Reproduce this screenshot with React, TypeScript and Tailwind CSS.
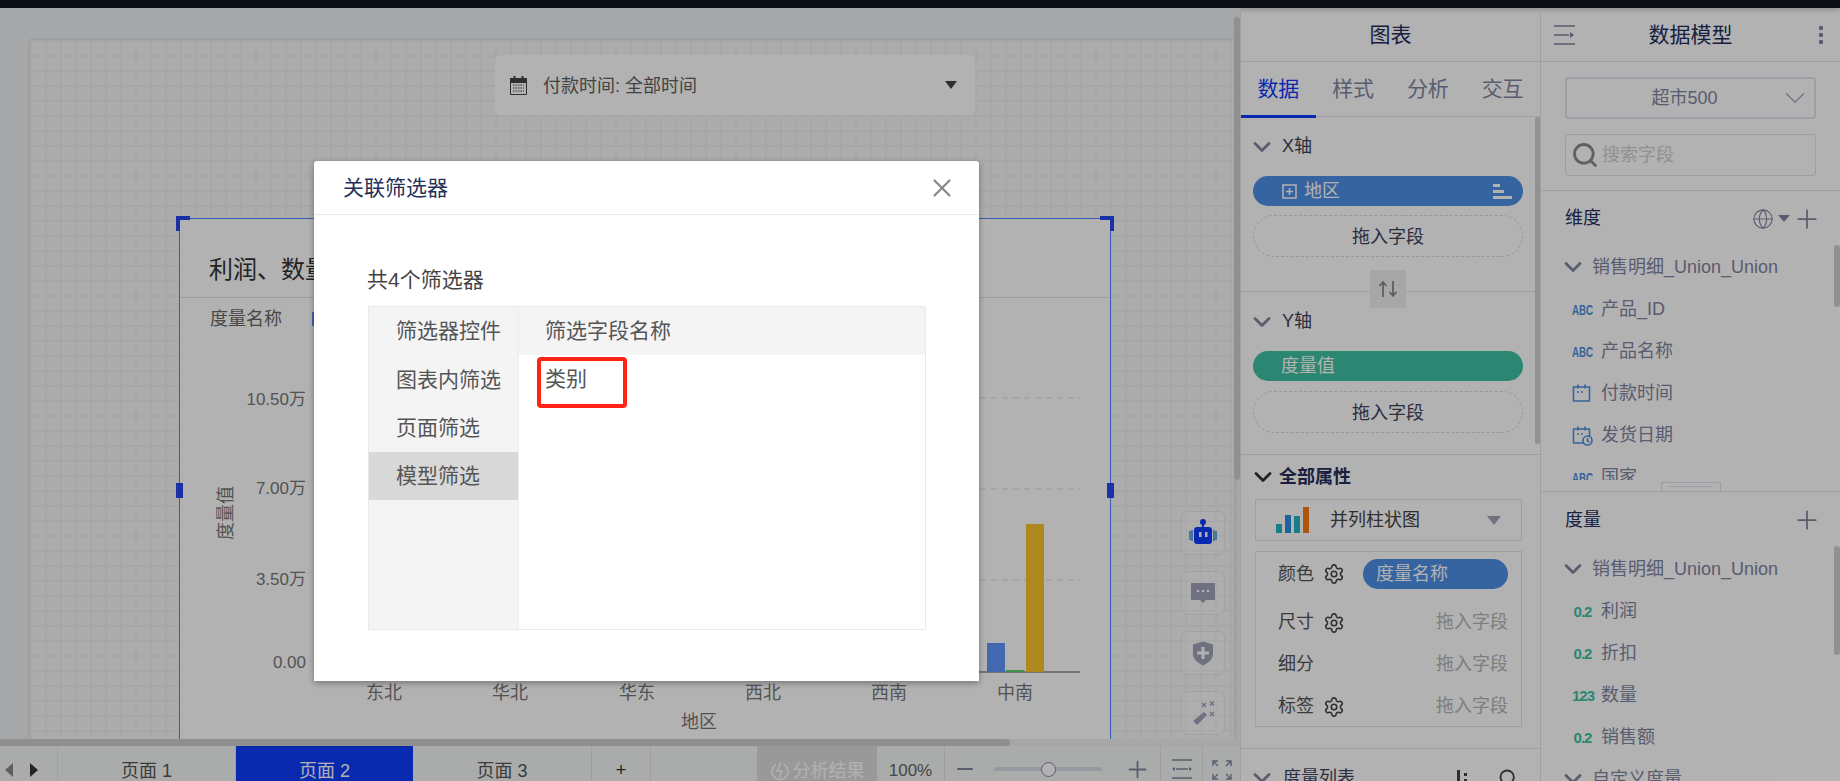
import { ChevronDown, Settings, Search, Globe, Plus, X, Minus } from "lucide-react";

const Gear = () => <Settings size={22} strokeWidth={1.7} className="text-[#444]" />;

function AbcTag() {
  return <span className="inline-block w-[21px] text-[15px] font-bold leading-none text-[#4f8fdc] scale-x-[.65] origin-left whitespace-nowrap">ABC</span>;
}
function NumTag({ t }: { t: string }) {
  return <span className="inline-block w-[21px] text-[15px] font-bold leading-none text-[#40c2a4] tracking-[-1px] text-center whitespace-nowrap">{t}</span>;
}
function CalIcon({ clock }: { clock?: boolean }) {
  return (
    <svg width="21" height="21" viewBox="0 0 21 21" fill="none" stroke="#4f8fdc" strokeWidth="1.6">
      <path d="M1.5 4h16v14h-16z" strokeLinejoin="round" />
      <path d="M6 1.5v4M13 1.5v4M5 9h2M9 9h2" />
      {clock && <circle cx="15.5" cy="15.5" r="4.5" fill="#fff" />}
      {clock && <path d="M15.5 13v3l2 1" />}
    </svg>
  );
}
function FieldRow({ icon, label }: { icon: React.ReactNode; label: string }) {
  return (
    <div className="h-[42px] flex items-center pl-[31px] shrink-0">
      <span className="w-[29px] flex items-center">{icon}</span>
      <span className="text-[18px] text-[#81859f] whitespace-nowrap">{label}</span>
    </div>
  );
}
function GroupRow({ label }: { label: string }) {
  return (
    <div className="h-[42px] flex items-center pl-[18px] shrink-0">
      <ChevronDown size={28} strokeWidth={2.4} className="text-[#81859f] mr-[5px]" />
      <span className="text-[18px] text-[#81859f] whitespace-nowrap">{label}</span>
    </div>
  );
}
function DropZone() {
  return (
    <div className="ml-[12px] mr-[17px] h-[42px] pt-[3px] rounded-full border border-dashed border-[#d8d8e0] flex items-center justify-center text-[18px] text-[#40445c]">
      拖入字段
    </div>
  );
}
function AxisHead({ label }: { label: string }) {
  return (
    <div className="flex items-center pl-[7px] text-[18px] text-[#40445c] h-full">
      <ChevronDown size={28} strokeWidth={2.4} className="text-[#81859f] mr-[6px]" />
      {label}
    </div>
  );
}
function AttrRow({ label, gear, h }: { label: string; gear?: boolean; h: string }) {
  return (
    <div className={`${h} flex items-center justify-between pl-[22px] pr-[13px]`}>
      <span className="flex items-center gap-[9px] text-[18px] text-[#555]">
        {label}
        {gear && <Gear />}
      </span>
      <span className="text-[18px] text-[#b5b5b5]">拖入字段</span>
    </div>
  );
}
function SideBtn({ children }: { children: React.ReactNode }) {
  return (
    <div className="w-[44px] h-[44px] rounded-[7px] border border-[#e6e6f0] flex items-center justify-center bg-white/30">
      {children}
    </div>
  );
}

export default function App() {
  return (
    <div className="relative w-[1840px] h-[781px] overflow-hidden flex flex-col bg-white font-['Liberation_Sans','Noto_Sans_CJK_SC',sans-serif]">
      <div className="relative h-[8px] bg-[#12151c] shrink-0 shadow-[0_2px_5px_rgba(0,0,0,0.2)]" />
      <div className="flex flex-1 min-h-0">
        {/* left */}
        <div className="w-[1240px] shrink-0 flex flex-col">
          <div className="relative flex-1 min-h-0 overflow-hidden bg-[#eef0f3] pl-[30px] pt-[32px] pr-[6px]">
            <div className="h-full bg-[#f6f6f7] [background-image:linear-gradient(#f0f0f1_2px,transparent_2px),linear-gradient(90deg,#f0f0f1_2px,transparent_2px)] bg-[size:15px_15px] flex flex-col shadow-[0_0_4px_rgba(0,0,0,0.15)]">
              <div className="ml-[465px] mt-[15px] w-[480px] h-[60px] shrink-0 rounded-[6px] bg-white flex items-center pl-[15px] pr-[18px] text-[18px] text-[#616161]">
                <svg width="17" height="20" viewBox="0 0 17 20" className="mr-[16px]">
                  <path d="M0.5 3.5h16v16h-16z" fill="#fff" stroke="#444" />
                  <path d="M0.5 3.5h16v4h-16z" fill="#444" stroke="#444" />
                  <path d="M4.5 1v5M12.5 1v5" stroke="#444" strokeWidth="2" />
                  <path d="M3 10h11M3 13h11M3 16h11" stroke="#444" strokeDasharray="1.5 1" />
                </svg>
                <span className="flex-1 whitespace-nowrap pt-[2px]">付款时间: 全部时间</span>
                <span className="w-0 h-0 border-x-[6px] border-x-transparent border-t-[8px] border-t-[#444]" />
              </div>
              <div className="relative ml-[149px] mt-[103px] w-[932px] flex-1 min-h-0 border-x border-t border-[#5384ff] bg-[#fff] flex flex-col">
                <span className="absolute -left-[4px] -top-[3px] w-[14px] h-[15px] border-l-[4px] border-t-[4px] border-[#2545f0]" />
                <span className="absolute -right-[4px] -top-[3px] w-[14px] h-[15px] border-r-[4px] border-t-[4px] border-[#2545f0]" />
                <span className="absolute -left-[4px] top-[264px] w-[7px] h-[15px] bg-[#2545f0]" />
                <span className="absolute -right-[4px] top-[264px] w-[7px] h-[15px] bg-[#2545f0]" />
                <div className="h-[79px] shrink-0 border-b border-[#e2e2e2] flex items-center pl-[29px] pt-[24px] text-[24px] text-[#333] whitespace-nowrap">
                  利润、数量、折扣、销售额
                </div>
                <div className="h-[42px] shrink-0 flex items-center pl-[30px] text-[18px] text-[#666]">
                  度量名称
                  <span className="ml-[30px] w-[14px] h-[14px] bg-[#5f8ff5]" />
                </div>
                <svg width="930" height="399" viewBox="0 0 930 399" className="shrink-0">
                  <g stroke="#ddd" strokeDasharray="6 5">
                    <line x1="140" x2="900" y1="58" y2="58" />
                    <line x1="140" x2="900" y1="149" y2="149" />
                    <line x1="140" x2="900" y1="240" y2="240" />
                  </g>
                  <line x1="140" x2="900" y1="332" y2="332" stroke="#a8a8a8" strokeWidth="2" />
                  <rect x="807" y="303" width="18" height="29" fill="#5f95ff" />
                  <rect x="826" y="330" width="18" height="2" fill="#61cf6a" />
                  <rect x="846" y="184" width="18" height="148" fill="#fdc52c" />
                  <g fill="#777" fontSize="17" textAnchor="end">
                    <text x="126" y="65">10.50万</text>
                    <text x="126" y="154">7.00万</text>
                    <text x="126" y="245">3.50万</text>
                    <text x="126" y="328">0.00</text>
                  </g>
                  <g fill="#777" fontSize="18" textAnchor="middle">
                    <text x="204" y="359">东北</text>
                    <text x="330" y="359">华北</text>
                    <text x="457" y="359">华东</text>
                    <text x="583" y="359">西北</text>
                    <text x="709" y="359">西南</text>
                    <text x="835" y="359">中南</text>
                    <text x="519" y="388">地区</text>
                    <text x="0" y="0" transform="translate(52 173) rotate(-90)">度量值</text>
                  </g>
                </svg>
              </div>
            </div>
            {/* side tools */}
            <div className="absolute left-[1181px] top-[503px] flex flex-col gap-[16px]">
              <SideBtn>
                <svg width="28" height="30" viewBox="0 0 28 30">
                  <circle cx="14" cy="4" r="3" fill="#0e3dfb" />
                  <rect x="13" y="5" width="2" height="5" fill="#0e3dfb" />
                  <rect x="5" y="9" width="18" height="17" rx="3" fill="#0e3dfb" />
                  <rect x="10" y="14" width="2.5" height="5" fill="#fff" />
                  <rect x="16" y="14" width="2.5" height="5" fill="#fff" />
                  <path d="M1 13v9M3 12v11" stroke="#3a8fd8" strokeWidth="1.5" />
                  <path d="M27 13v9M25 12v11" stroke="#3a8fd8" strokeWidth="1.5" />
                </svg>
              </SideBtn>
              <SideBtn>
                <svg width="26" height="22" viewBox="0 0 26 22">
                  <path d="M1 1h24v17h-9l-3 3-3-3H1z" fill="#9fa2b8" />
                  <circle cx="8" cy="9" r="1.3" fill="#fff" />
                  <circle cx="13" cy="9" r="1.3" fill="#fff" />
                  <circle cx="18" cy="9" r="1.3" fill="#fff" />
                </svg>
              </SideBtn>
              <SideBtn>
                <svg width="22" height="25" viewBox="0 0 22 25">
                  <path d="M11 0.5L21 3.5V13c0 5-4.5 9-10 11.5C5.5 22 1 18 1 13V3.5z" fill="#9fa2b8" />
                  <path d="M11 6v12M5 12h12" stroke="#fff" strokeWidth="3" />
                </svg>
              </SideBtn>
              <SideBtn>
                <svg width="26" height="26" viewBox="0 0 26 26">
                  <path d="M3 21L14 12l3 3L7 25z" fill="#9fa2b8" />
                  <path d="M13 3l4 4M17 3l-4 4M21 1.500l4 4M25 1.500l-4 4M21 12l4 4M25 12l-4 4" stroke="#9fa2b8" strokeWidth="1.4" transform="translate(-1 0)" />
                </svg>
              </SideBtn>
            </div>
            {/* v scroll */}
            <div className="absolute right-0 top-[9px] w-[6px] h-[463px] rounded-[3px] bg-[#cfcfcf]" />
          </div>
          {/* h scroll */}
          <div className="h-[7px] shrink-0 bg-[#f0f0f0]">
            <div className="h-full w-[1010px] rounded-r-[3px] bg-[#cdcdcd]" />
          </div>
          {/* footer */}
          <div className="h-[35px] shrink-0 bg-[#f4f7f5] flex items-center text-[18px] text-[#555]">
            <div className="w-[58px] h-full pt-[13px] pl-[5px] flex items-center gap-[17px] border-r border-[#e4e4e4]">
              <span className="w-0 h-0 border-y-[7px] border-y-transparent border-r-[8px] border-r-[#888]" />
              <span className="w-0 h-0 border-y-[7px] border-y-transparent border-l-[8px] border-l-[#333]" />
            </div>
            <div className="w-[178px] h-full pt-[15px] flex items-center justify-center border-r border-[#e4e4e4]">页面 1</div>
            <div className="w-[177px] h-full pt-[15px] flex items-center justify-center bg-[#0e3dfb] text-white">页面 2</div>
            <div className="w-[179px] h-full pt-[15px] flex items-center justify-center border-r border-[#e4e4e4]">页面 3</div>
            <div className="w-[59px] h-full pt-[14px] flex items-center justify-center border-r border-[#e4e4e4] text-[#333]">+</div>
            <div className="w-[106px] h-full" />
            <div className="w-[120px] h-full pt-[15px] bg-[#dcdcdc] flex items-center justify-center gap-[3px] text-white">
              <svg width="20" height="20" viewBox="0 0 20 20" fill="none" stroke="#fff" strokeWidth="1.4">
                <path d="M6 3.500A8 8 0 1 0 14 3.500" />
                <path d="M11 1L7 10h5l-3 7" />
              </svg>
              分析结果
            </div>
            <div className="w-[68px] h-full pt-[14px] text-[17px] flex items-center justify-center border-r border-[#e4e4e4] text-[#666]">100%</div>
            <div className="w-[216px] h-full pt-[11px] flex items-center pl-[8px] border-r border-[#e4e4e4] text-[#81859f]">
              <Minus size={24} strokeWidth={2} />
              <div className="ml-[17px] w-[108px] h-[4px] bg-[#dcdce6] flex items-center justify-center">
                <div className="w-[15px] h-[15px] rounded-full border-[1.5px] border-[#81859f] bg-white shrink-0" />
              </div>
              <Plus size={27} strokeWidth={1.6} className="ml-[22px]" />
            </div>
            <div className="w-[42px] h-full pt-[10px] flex items-center justify-center border-r border-[#e4e4e4]">
              <svg width="22" height="20" viewBox="0 0 22 20" fill="none" stroke="#81859f" strokeWidth="1.5">
                <path d="M1 1h20M1 19h20M5 10h12" />
                <path d="M1 10l3-2v4zM21 10l-3-2v4z" fill="#81859f" stroke="none" />
              </svg>
            </div>
            <div className="flex-1 h-full pt-[12px] flex items-center justify-center">
              <svg width="20" height="20" viewBox="0 0 20 20" fill="none" stroke="#81859f" strokeWidth="1.4">
                <path d="M1 6V1h5M1 1l5 5M19 6V1h-5M19 1l-5 5M1 14v5h5M1 19l5-5M19 14v5h-5M19 19l-5-5" />
              </svg>
            </div>
          </div>
        </div>

        {/* chart panel */}
        <div className="relative w-[300px] shrink-0 border-l border-[#e4e4e4] flex flex-col">
          <div className="h-[54px] shrink-0 border-b border-[#e4e4e4] flex items-center justify-center text-[21px] text-[#252e5b]">图表</div>
          <div className="h-[55px] shrink-0 border-b border-[#e2e2ee] flex text-[21px] text-[#81859f]">
            <div className="w-[75px] h-[56px] flex items-center justify-center text-[#0e3dfb] border-b-[3px] border-[#0e3dfb]">数据</div>
            <div className="w-[75px] flex items-center justify-center">样式</div>
            <div className="w-[75px] flex items-center justify-center">分析</div>
            <div className="w-[75px] flex items-center justify-center">交互</div>
          </div>
          <div className="flex-1 min-h-0 overflow-hidden flex flex-col">
            <div className="h-[175px] shrink-0 border-b border-[#e4e4e4]">
              <div className="h-[59px]"><AxisHead label="X轴" /></div>
              <div className="ml-[12px] mr-[17px] h-[30px] pt-[1px] rounded-full bg-[#4c90e5] flex items-center pl-[29px] pr-[11px] text-[18px] text-[#fff]">
                <svg width="15" height="15" viewBox="0 0 15 15" fill="none" stroke="#fff" strokeWidth="1.5" className="mr-[7px]">
                  <rect x="1" y="1" width="13" height="13" />
                  <path d="M7.500 4v7M4 7.500h7" />
                </svg>
                <span className="flex-1">地区</span>
                <svg width="19" height="15" viewBox="0 0 19 15" fill="#fff">
                  <rect x="0" y="0" width="7" height="3" />
                  <rect x="0" y="6" width="11" height="3" />
                  <rect x="0" y="12" width="19" height="3" />
                </svg>
              </div>
              <div className="mt-[9px]"><DropZone /></div>
            </div>
            <div className="h-[163px] shrink-0 border-b border-[#e2e2ee]">
              <div className="h-[59px]"><AxisHead label="Y轴" /></div>
              <div className="ml-[12px] mr-[17px] h-[30px] rounded-full bg-[#40c2a4] flex items-center pl-[28px] text-[18px] text-[#fff]">度量值</div>
              <div className="mt-[10px]"><DropZone /></div>
            </div>
            <div className="h-[294px] shrink-0 border-b border-[#e2e2ee]">
              <div className="h-[44px] flex items-center pl-[8px] text-[18px] font-bold text-[#252e5b]">
                <ChevronDown size={28} strokeWidth={2.4} className="text-[#333] mr-[2px]" />
                全部属性
              </div>
              <div className="ml-[14px] mr-[18px] h-[42px] border border-[#e2e2ee] flex items-center pl-[20px] pr-[20px] text-[18px] text-[#444]">
                <svg width="34" height="26" viewBox="0 0 34 26" className="mr-[20px]">
                  <rect x="0" y="17" width="6" height="9" fill="#1fb5c4" />
                  <rect x="9" y="8" width="6" height="18" fill="#2b90e0" />
                  <rect x="18" y="9" width="6" height="17" fill="#1fb5c4" />
                  <rect x="27" y="0" width="6" height="26" fill="#f57a14" />
                </svg>
                <span className="flex-1">并列柱状图</span>
                <span className="w-0 h-0 border-x-[7px] border-x-transparent border-t-[9px] border-t-[#9fa2b8]" />
              </div>
              <div className="ml-[14px] mr-[18px] mt-[10px] h-[176px] border border-[#e2e2ee]">
                <div className="h-[44px] flex items-center justify-between pl-[22px] pr-[13px]">
                  <span className="flex items-center gap-[9px] text-[18px] text-[#555]">颜色<Gear /></span>
                  <span className="w-[145px] h-[30px] rounded-full bg-[#4c90e5] text-[18px] text-white pl-[13px] flex items-center">度量名称</span>
                </div>
                <AttrRow label="尺寸" gear h="h-[49px] pt-[4px]" />
                <AttrRow label="细分" h="h-[38px]" />
                <AttrRow label="标签" gear h="h-[43px] pt-[4px]" />
              </div>
            </div>
            <div className="h-[58px] shrink-0 flex items-center pl-[7px] pr-[22px] text-[18px] text-[#40445c]">
              <ChevronDown size={28} strokeWidth={2.4} className="text-[#81859f] mr-[7px]" />
              <span className="flex-1 whitespace-nowrap">度量列表</span>
              <svg width="11" height="16" viewBox="0 0 11 16" fill="#444" className="mr-[30px]">
                <rect x="0" y="0" width="3" height="16" />
                <rect x="7" y="3" width="3" height="3" />
                <rect x="7" y="9" width="3" height="3" />
              </svg>
              <Search size={20} strokeWidth={2.2} className="text-[#444]" />
            </div>
          </div>
          <div className="absolute left-[129px] top-[262px] w-[36px] h-[38px] bg-[#f0f0f0] flex items-center justify-center text-[#81859f]">
            <svg width="20" height="18" viewBox="0 0 20 18" fill="none" stroke="#888" strokeWidth="1.800">
              <path d="M5 17V3M1.500 6L5 2l3.500 4" />
              <path d="M15 1v14M11.500 12l3.500 4 3.500-4" />
            </svg>
          </div>
          <div className="absolute right-0 top-[109px] w-[5px] h-[327px] rounded-[3px] bg-[#d0d0d0]" />
        </div>

        {/* model panel */}
        <div className="relative flex-1 border-l border-[#e4e4e4] flex flex-col">
          <div className="h-[54px] shrink-0 border-b border-[#e4e4e4] flex items-center justify-between pl-[12px] pr-[16px]">
            <svg width="22" height="22" viewBox="0 0 22 22" fill="none" stroke="#81859f" strokeWidth="1.500">
              <path d="M1 2h21M1 11h15M1 20h21" />
              <path d="M17 8l4 3-4 3z" fill="#81859f" stroke="none" />
            </svg>
            <span className="text-[21px] text-[#252e5b] -ml-[12px]">数据模型</span>
            <svg width="6" height="20" viewBox="0 0 6 20" fill="#81859f">
              <circle cx="3" cy="3" r="2.200" />
              <circle cx="3" cy="10" r="2.200" />
              <circle cx="3" cy="17" r="2.200" />
            </svg>
          </div>
          <div className="h-[129px] shrink-0 border-b border-[#e4e4e4] px-[24px] pt-[15px] flex flex-col gap-[15px]">
            <div className="h-[42px] rounded-[3px] border-2 border-[#e2e2ee] flex items-center pr-[2px]">
              <span className="flex-1 text-center text-[18px] text-[#81859f] pl-[24px]">超市500</span>
              <ChevronDown size={34} strokeWidth={0.8} className="text-[#9fa2b8]" />
            </div>
            <div className="h-[42px] rounded-[3px] border border-[#e2e2ee] flex items-center pl-[5px] text-[18px] text-[#d0d0d0]">
              <Search size={28} strokeWidth={2.4} className="text-[#8a8a8a] mr-[3px]" />
              搜索字段
            </div>
          </div>
          <div className="relative h-[301px] shrink-0 overflow-hidden border-b border-[#e2e2ee]">
            <div className="h-[289px] overflow-hidden flex flex-col">
              <div className="h-[55px] shrink-0 flex items-center justify-between pl-[24px] pr-[18px] text-[18px] text-[#252e5b]">
                维度
                <span className="flex items-center text-[#81859f]">
                  <Globe size={22} strokeWidth={1.200} />
                  <span className="ml-[4px] w-0 h-0 border-x-[6px] border-x-transparent border-t-[7px] border-t-[#81859f]" />
                  <Plus size={30} strokeWidth={1.400} className="ml-[2px]" />
                </span>
              </div>
              <GroupRow label="销售明细_Union_Union" />
              <FieldRow icon={<AbcTag />} label="产品_ID" />
              <FieldRow icon={<AbcTag />} label="产品名称" />
              <FieldRow icon={<CalIcon />} label="付款时间" />
              <FieldRow icon={<CalIcon clock />} label="发货日期" />
              <FieldRow icon={<AbcTag />} label="国家" />
            </div>
            <div className="absolute right-0 top-[54px] w-[6px] h-[62px] rounded-[3px] bg-[#d0d0d0]" />
            <div className="absolute left-[120px] bottom-0 w-[60px] h-[9px] border border-b-0 border-[#e2e2ee] bg-white flex justify-center pt-[3px]">
              <span className="w-[44px] h-[1px] bg-[#e2e2ee]" />
            </div>
          </div>
          <div className="relative flex-1 min-h-0 overflow-hidden flex flex-col">
            <div className="h-[56px] shrink-0 flex items-center justify-between pl-[24px] pr-[18px] text-[18px] text-[#252e5b]">
              度量
              <Plus size={30} strokeWidth={1.400} className="text-[#81859f]" />
            </div>
            <GroupRow label="销售明细_Union_Union" />
            <FieldRow icon={<NumTag t="0.2" />} label="利润" />
            <FieldRow icon={<NumTag t="0.2" />} label="折扣" />
            <FieldRow icon={<NumTag t="123" />} label="数量" />
            <FieldRow icon={<NumTag t="0.2" />} label="销售额" />
            <GroupRow label="自定义度量" />
            <div className="absolute right-0 top-[54px] w-[6px] h-[109px] rounded-[3px] bg-[#d0d0d0]" />
          </div>
        </div>
      </div>

      {/* dim layer */}
      <div className="absolute inset-0 bg-black/30" />

      {/* dialog */}
      <div className="absolute left-[314px] top-[161px] w-[665px] h-[520px] bg-white rounded-t-[3px] shadow-[0_2px_6px_rgba(0,0,0,0.35)] flex flex-col">
        <div className="h-[54px] shrink-0 border-b border-[#e8e8f0] flex items-center justify-between pl-[29px] pr-[22px] text-[21px] text-[#253058]">
          关联筛选器
          <X size={30} strokeWidth={1.8} className="text-[#8a8a8a]" />
        </div>
        <div className="px-[54px] pt-[48px]">
          <div className="h-[34px] text-[21px] leading-[34px] text-[#444] -ml-[1px]">共4个筛选器</div>
          <div className="mt-[9px] w-[558px] h-[324px] border border-[#e8e8f0] flex text-[21px] text-[#555]">
            <div className="w-[150px] shrink-0 bg-[#f4f4f5] border-r border-[#ececf2]">
              <div className="h-[48px] flex items-center pl-[27px]">筛选器控件</div>
              <div className="h-[49px] flex items-center pl-[27px]">图表内筛选</div>
              <div className="h-[48px] flex items-center pl-[27px]">页面筛选</div>
              <div className="h-[48px] flex items-center pl-[27px] bg-[#d8d8d8]">模型筛选</div>
            </div>
            <div className="flex-1">
              <div className="h-[48px] bg-[#f4f4f5] flex items-center pl-[26px]">筛选字段名称</div>
              <div className="relative h-[48px] flex items-center pl-[26px]">
                类别
                <span className="absolute left-[18px] top-[2px] w-[90px] h-[51px] rounded-[4px] border-[4px] border-[#ff2416]" />
              </div>
            </div>
          </div>
        </div>
      </div>
    </div>
  );
}
